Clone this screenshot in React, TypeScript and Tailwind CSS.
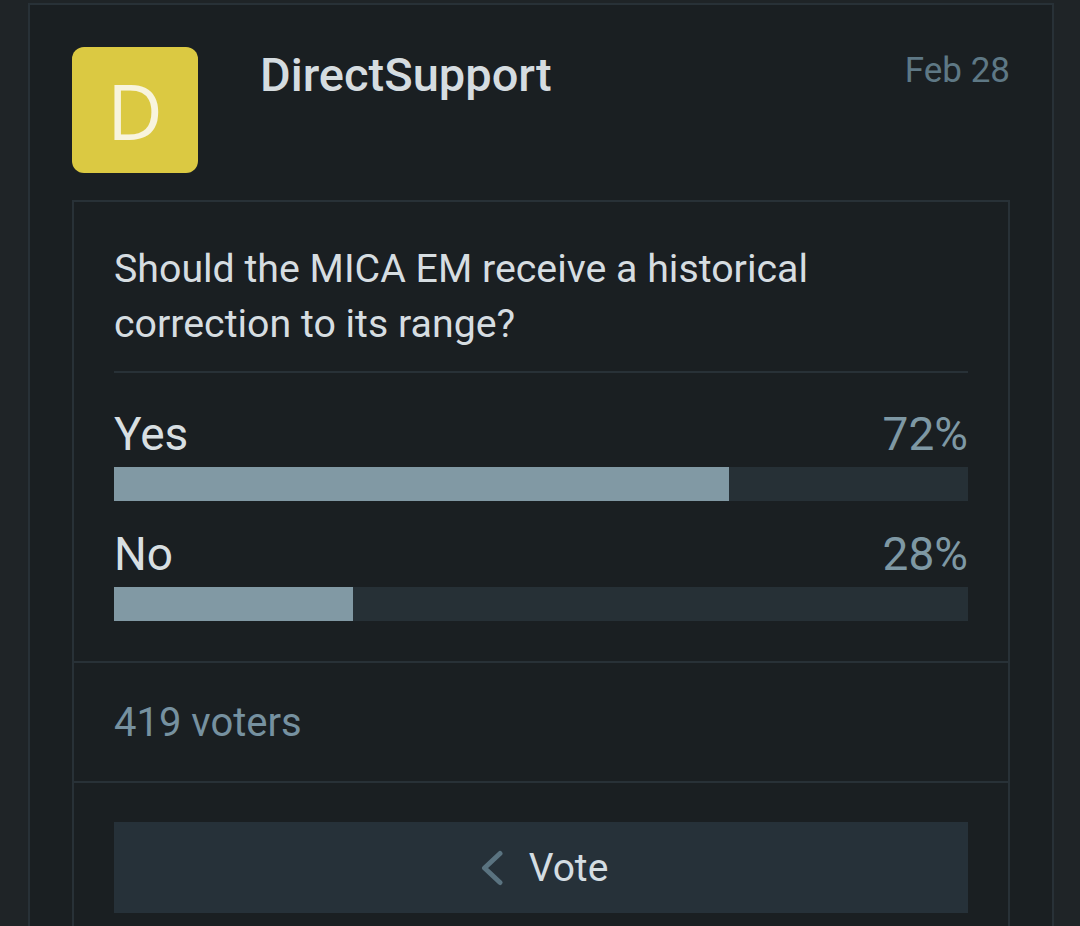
import React from 'react'

const options = [
  { label: 'Yes', pct: 72 },
  { label: 'No', pct: 28 },
]

function Chevron() {
  return (
    <svg width="24" height="36" viewBox="0 0 24 36" fill="none" aria-hidden="true">
      <polyline
        points="20,3.5 4.5,18 20,32.5"
        stroke="#5a7380"
        strokeWidth="5"
        strokeLinecap="round"
        strokeLinejoin="round"
      />
    </svg>
  )
}

export default function App() {
  return (
    <div
      className="h-[926px] w-[1080px] overflow-hidden bg-[#1f2427] pt-[3px]"
      style={{ fontFamily: 'Roboto, "Liberation Sans", sans-serif' }}
    >
      <div className="ml-[28px] h-[940px] w-[1026px] border-2 border-[#283137] bg-[#1a1f22] px-[42px] pt-[42px]">
        {/* header */}
        <div className="flex items-start">
          <div
            className="flex h-[126px] w-[126px] shrink-0 items-center justify-center rounded-[12px] bg-[#dbc942] text-[77px] leading-none text-[#f8f4dd]"
            style={{ fontFamily: '"Open Sans", "Noto Sans", sans-serif' }}
          >
            D
          </div>
          <div className="ml-[62px] text-[47px] leading-[55px] font-medium text-[#d5dce0]">DirectSupport</div>
          <div className="ml-auto pt-[3px] text-[35px] leading-[41px] text-[#5e7885]">Feb 28</div>
        </div>

        {/* poll */}
        <div className="mt-[27px] border-2 border-[#283137]">
          <div className="p-[40px]">
            <p className="mb-[19px] text-[39.3px] leading-[55px] text-[#d6dde1]">
              Should the MICA EM receive a historical
              <br />
              correction to its range?
            </p>
            <div className="h-[2px] bg-[#283137]" />
            <div className="mt-[34px] flex flex-col gap-[26px]">
              {options.map((o) => (
                <div key={o.label}>
                  <div className="flex items-baseline justify-between text-[46px] leading-[54px]">
                    <span className="text-[#d8dfe2]">{o.label}</span>
                    <span className="text-[#7e98a4]">{o.pct}%</span>
                  </div>
                  <div className="mt-[6px] h-[34px] bg-[#263036]">
                    <div className="h-full bg-[#8199a4]" style={{ width: `${o.pct}%` }} />
                  </div>
                </div>
              ))}
            </div>
          </div>

          <div className="flex h-[120px] items-center border-t-2 border-[#283137] px-[40px] text-[40px] leading-[47px] text-[#7691a0]">
            419 voters
          </div>

          <div className="border-t-2 border-[#283137] px-[40px] pt-[39px] pb-[40px]">
            <button className="flex h-[91px] w-full items-center justify-center gap-[25px] bg-[#263139] pl-[6px] text-[39px] leading-[46px] text-[#d4dde2]">
              <Chevron />
              <span>Vote</span>
            </button>
          </div>
        </div>
      </div>
    </div>
  )
}
